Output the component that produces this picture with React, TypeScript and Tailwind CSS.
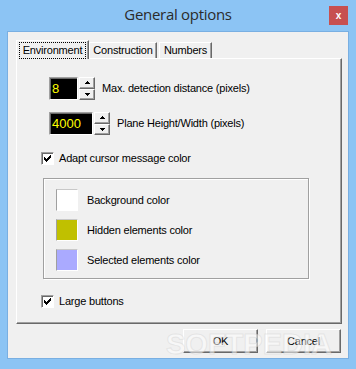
import React from "react";

const raised =
  "border border-t-white border-l-white border-r-[#696969] border-b-[#696969] shadow-[inset_-1px_-1px_0_#a0a0a0]";
const sunken =
  "border border-t-[#a0a0a0] border-l-[#a0a0a0] border-r-white border-b-white shadow-[inset_1px_1px_0_#696969]";
const tabEdge =
  "border border-b-0 border-t-white border-l-white border-r-[#696969] shadow-[inset_-1px_0_0_#a0a0a0] bg-[#f0f0f0]";

function Check() {
  return (
    <div className={`w-[13px] h-[13px] bg-white flex items-center justify-center ${sunken}`}>
      <svg width="7" height="7" viewBox="0 0 7 7" shapeRendering="crispEdges">
        <path
          d="M6 0h1v3h-1zM5 1h1v3h-1zM4 2h1v3h-1zM3 3h1v3h-1zM2 4h1v3h-1zM1 3h1v3h-1zM0 2h1v3h-1z"
          fill="#000"
        />
      </svg>
    </div>
  );
}

function Arrow({ up }: { up?: boolean }) {
  return (
    <svg width="5" height="3" viewBox="0 0 5 3" shapeRendering="crispEdges">
      <path d={up ? "M2 0h1v1h1v1h1v1h-5v-1h1v-1h1z" : "M0 0h5v1h-1v1h-1v1h-1v-1h-1v-1h-1z"} fill="#000" />
    </svg>
  );
}

function Spin({ value, width, label }: { value: string; width: string; label: string }) {
  return (
    <div className="flex items-center">
      <div
        className={`${width} h-[23px] bg-black text-[#ffff00] text-[13px] tracking-[0px] leading-none flex items-center pl-[2px] ${sunken}`}
        style={{ fontFamily: '"Liberation Sans", Arial, sans-serif' }}
      >
        {value}
      </div>
      <div className="flex flex-col ml-[1px] w-[16px] h-[23px]">
        <div className={`flex-1 flex items-center justify-center bg-[#f0f0f0] ${raised}`}>
          <Arrow up />
        </div>
        <div className={`flex-1 flex items-center justify-center bg-[#f0f0f0] ${raised}`}>
          <Arrow />
        </div>
      </div>
      <span className="ml-[7px]">{label}</span>
    </div>
  );
}

function Swatch({ color, label }: { color: string; label: string }) {
  return (
    <div className="flex items-center">
      <div
        className={`w-[22px] h-[22px] ${color} border border-l-[#a0a0a0] border-t-[#c8c8c8] border-r-white border-b-white`}
      />
      <span className="ml-[9px]">{label}</span>
    </div>
  );
}

export default function App() {
  return (
    <div
      className="w-[356px] h-[369px] bg-[#8cc4f4] flex flex-col px-[7px] pb-[10px] text-[11px] tracking-[-0.2px] text-black relative overflow-hidden"
      style={{ fontFamily: '"Liberation Sans", Arial, sans-serif' }}
    >
      <div className="h-[31px] shrink-0 flex items-start relative">
        <div
          className="flex-1 text-center text-[15px] tracking-[-0.3px] text-[#2b2b2b] pt-[3px]"
          style={{ fontFamily: '"Open Sans", "Noto Sans", sans-serif' }}
        >
          General options
        </div>
        <div className="absolute right-[1px] top-[6px] w-[19px] h-[19px] bg-[#c75050] flex items-center justify-center text-white text-[10px] font-bold">
          x
        </div>
      </div>

      <div className="flex-1 bg-[#f0f0f0] border border-[#79afe2] flex flex-col pl-[8px] pr-[6px]">
        <div className="flex items-end mt-[8px] h-[18px] shrink-0">
          <div className={`relative z-10 w-[73px] h-[19px] -mb-[1px] ${tabEdge} flex items-center justify-center pt-[1px]`}>
            <span className="border border-dotted border-black px-[3px] leading-[15px]">Environment</span>
          </div>
          <div className={`w-[68px] h-[16px] ${tabEdge} flex items-center justify-center`}>Construction</div>
          <div className={`w-[53px] h-[16px] ml-[2px] ${tabEdge} flex items-center justify-center`}>Numbers</div>
        </div>

        <div className={`h-[266px] shrink-0 ${raised} flex flex-col pl-[32px] pt-[18px]`}>
          <Spin value="8" width="w-[29px]" label="Max. detection distance (pixels)" />
          <div className="mt-[12px]">
            <Spin value="4000" width="w-[44px]" label="Plane Height/Width (pixels)" />
          </div>

          <div className="flex items-center h-[13px] -ml-[8px] mt-[17px]">
            <Check />
            <span className="ml-[5px]">Adapt cursor message color</span>
          </div>

          <div className="-ml-[6px] mt-[13px] w-[266px] h-[101px] shrink-0 border border-[#a0a0a0] shadow-[1px_1px_0_white,inset_1px_1px_0_white] flex flex-col gap-[8px] pl-[12px] pt-[10px]">
            <Swatch color="bg-white" label="Background color" />
            <Swatch color="bg-[#c0c000]" label="Hidden elements color" />
            <Swatch color="bg-[#aaaaff]" label="Selected elements color" />
          </div>

          <div className="flex items-center h-[13px] -ml-[8px] mt-[16px]">
            <Check />
            <span className="ml-[5px]">Large buttons</span>
          </div>
        </div>

        <div className="flex justify-end gap-[8px] mt-[5px] pr-[1px]">
          <div className={`w-[75px] h-[24px] flex items-center justify-center bg-[#f0f0f0] ${raised}`}>OK</div>
          <div className={`w-[75px] h-[24px] flex items-center justify-center bg-[#f0f0f0] ${raised}`}>Cancel</div>
        </div>
      </div>

      <div
        className="absolute left-[166px] top-[323px] text-[29px] font-bold tracking-[0px] text-white/50 pointer-events-none [-webkit-text-stroke:1px_rgba(200,200,200,0.35)]"
        style={{ fontFamily: '"Liberation Sans", sans-serif' }}
      >
        SOFTPEDIA
      </div>
    </div>
  );
}
